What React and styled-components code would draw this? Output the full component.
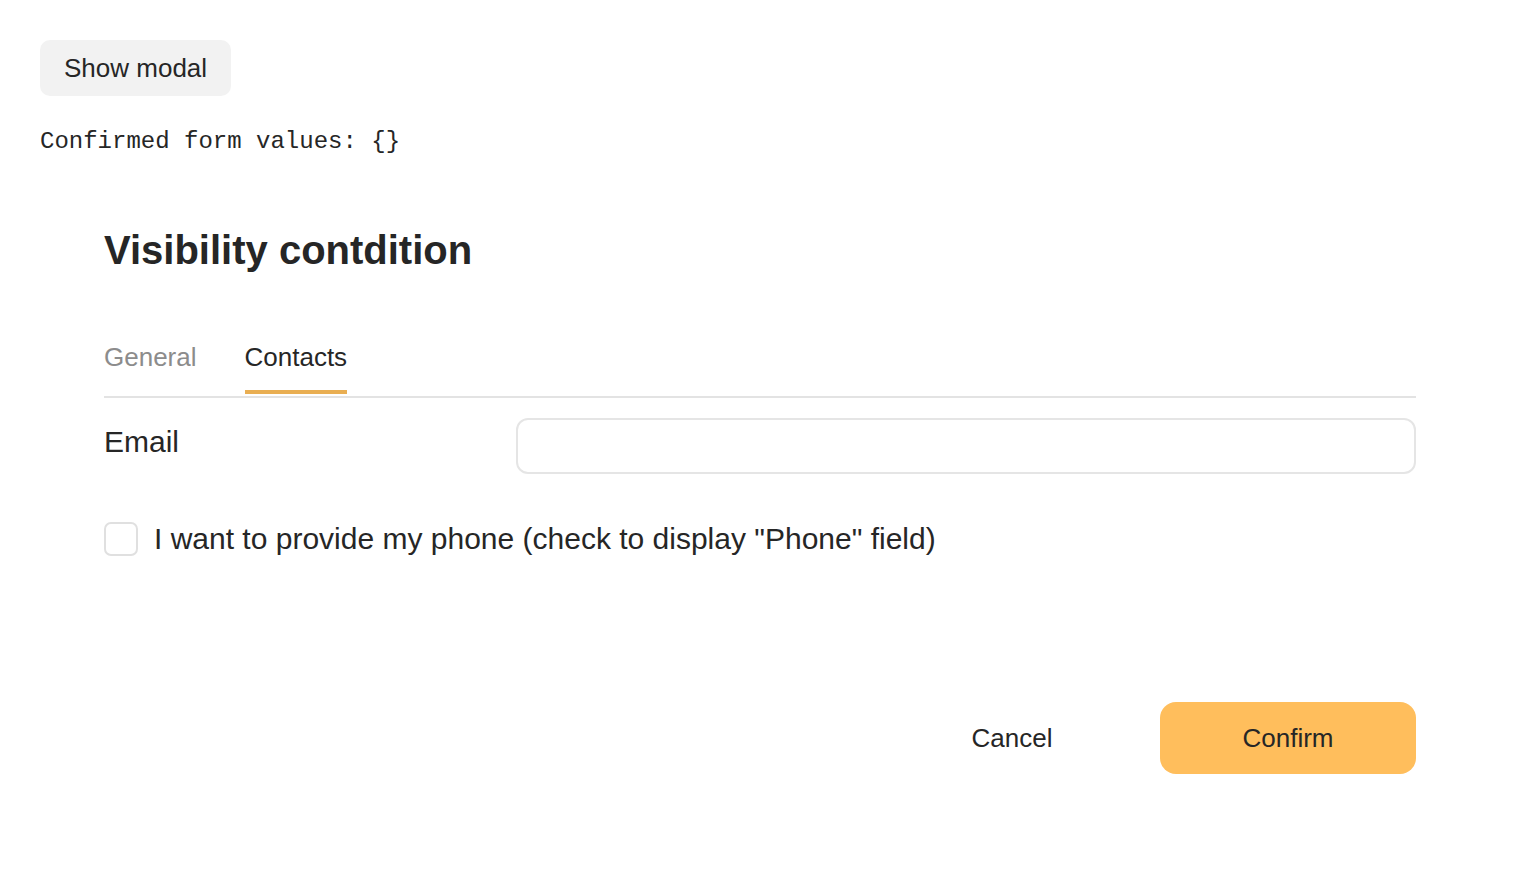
import React, { useState } from 'react'
import styled, { createGlobalStyle } from 'styled-components'

const GlobalStyle = createGlobalStyle`
  html, body {
    margin: 0;
    padding: 0;
    background: #ffffff;
  }
  body {
    font-family: "Liberation Sans", Arial, sans-serif;
    color: #262626;
  }
`

const Page = styled.div`
  padding: 40px;
  box-sizing: border-box;
`

const ShowButton = styled.button`
  height: 56px;
  padding: 0 24px;
  border: none;
  border-radius: 10px;
  background: #f2f2f2;
  font-family: "Liberation Sans", Arial, sans-serif;
  font-size: 26px;
  line-height: 54px;
  color: #262626;
  cursor: pointer;
`

const Values = styled.pre`
  margin: 30px 0 0 0;
  font-family: "Liberation Mono", "Courier New", monospace;
  font-size: 24px;
  line-height: 32px;
  color: #262626;
`

const Modal = styled.div`
  margin: 64px 64px 0 64px;
  display: flex;
  flex-direction: column;
`

const Title = styled.h2`
  margin: 0;
  font-size: 40px;
  line-height: 56px;
  font-weight: bold;
  color: #262626;
`

const TabList = styled.div`
  margin-top: 64px;
  display: flex;
  gap: 48px;
  border-bottom: 2px solid #e3e3e3;
`

const Tab = styled.button`
  background: none;
  border: none;
  padding: 0 0 18px 0;
  font-family: "Liberation Sans", Arial, sans-serif;
  font-size: 26px;
  line-height: 30px;
  color: ${p => (p.$active ? '#262626' : '#8c8c8c')};
  border-bottom: 4px solid ${p => (p.$active ? '#e9ae52' : 'transparent')};
  margin-bottom: 2px;
  cursor: pointer;
`

const FieldRow = styled.div`
  margin-top: 20px;
  display: grid;
  grid-template-columns: 412px 1fr;
  align-items: start;
`

const Label = styled.label`
  font-size: 30px;
  line-height: 48px;
  color: #262626;
`

const Input = styled.input`
  height: 56px;
  box-sizing: border-box;
  border: 2px solid #e5e5e5;
  border-radius: 12px;
  font-size: 26px;
  padding: 0 16px;
  outline: none;
`

const CheckRow = styled.label`
  margin-top: 48px;
  display: flex;
  align-items: center;
  gap: 16px;
  font-size: 30px;
  color: #262626;
  cursor: pointer;
`

const Box = styled.span`
  width: 34px;
  height: 34px;
  box-sizing: border-box;
  border: 2px solid #e0e0e0;
  border-radius: 7px;
  background: #fff;
  flex-shrink: 0;
`

const Footer = styled.div`
  margin-top: 146px;
  display: flex;
  justify-content: flex-end;
  align-items: center;
  gap: 20px;
`

const FooterButton = styled.button`
  width: 256px;
  height: 72px;
  border: none;
  border-radius: 16px;
  background: ${p => (p.$primary ? '#ffbe5c' : 'transparent')};
  font-family: "Liberation Sans", Arial, sans-serif;
  font-size: 26px;
  color: #262626;
  cursor: pointer;
`

export default function App() {
  const [tab, setTab] = useState('contacts')
  return (
    <>
      <GlobalStyle />
      <Page>
        <ShowButton>Show modal</ShowButton>
        <Values>Confirmed form values: {'{}'}</Values>
        <Modal>
          <Title>Visibility contdition</Title>
          <TabList>
            <Tab $active={tab === 'general'} onClick={() => setTab('general')}>General</Tab>
            <Tab $active={tab === 'contacts'} onClick={() => setTab('contacts')}>Contacts</Tab>
          </TabList>
          <FieldRow>
            <Label>Email</Label>
            <Input type="text" />
          </FieldRow>
          <CheckRow>
            <Box />
            I want to provide my phone (check to display "Phone" field)
          </CheckRow>
          <Footer>
            <FooterButton>Cancel</FooterButton>
            <FooterButton $primary>Confirm</FooterButton>
          </Footer>
        </Modal>
      </Page>
    </>
  )
}
